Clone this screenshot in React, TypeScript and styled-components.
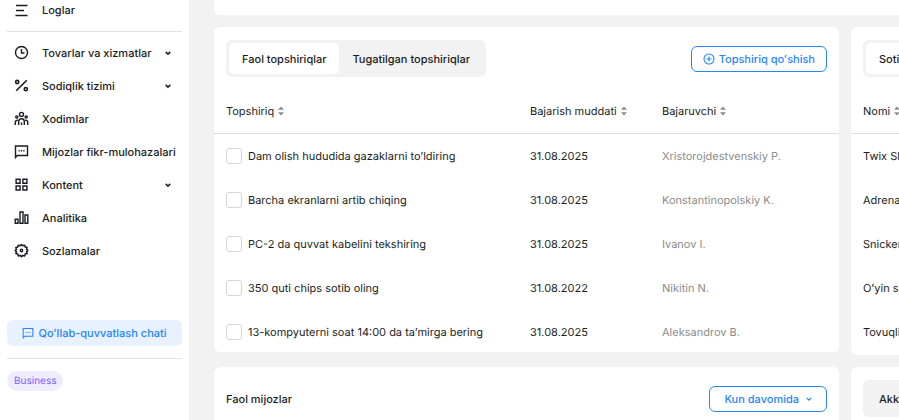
import React from "react";
import styled, { createGlobalStyle, css } from "styled-components";

const GlobalStyle = createGlobalStyle`
  *, *::before, *::after { box-sizing: border-box; }
  body {
    margin: 0;
    background: #f2f2f2;
    color: #1a1d24;
    font-family: "Inter", "Liberation Sans", sans-serif;
    font-size: 11px;
    line-height: 16px;
    text-rendering: geometricPrecision;
  }
  button, input { font: inherit; color: inherit; margin: 0; text-rendering: inherit; }
`;

const Page = styled.div`
  display: flex;
  min-height: 100vh;
  overflow: hidden;
`;

const Sidebar = styled.aside`
  flex: 0 0 189px;
  min-width: 0;
  padding: 0 7px 12px;
  background: #fff;
`;

const NavList = styled.ul<{ $spaced?: boolean }>`
  margin: 0;
  padding: ${(p) => (p.$spaced ? "4px 0 0" : "0")};
  list-style: none;
`;

const NavLink = styled.a<{ $short?: boolean }>`
  display: flex;
  align-items: center;
  gap: 13px;
  height: ${(p) => (p.$short ? "20px" : "33px")};
  padding: 0 11px 0 7px;
  color: inherit;
  font-weight: 500;
  text-decoration: none;
  white-space: nowrap;
`;

const NavLabel = styled.span`
  flex: 1;
  min-width: 0;
`;

const Rule = styled.hr<{ $gap: string }>`
  height: 1px;
  margin: ${(p) => p.$gap};
  border: 0;
  background: #e2e2e2;
`;

const SupportButton = styled.button`
  display: flex;
  align-items: center;
  justify-content: center;
  gap: 4px;
  width: 100%;
  height: 26px;
  margin-top: 53px;
  padding: 0;
  border: 0;
  border-radius: 6px;
  background: #e8f1ff;
  color: #2684ff;
  font-weight: 500;
`;

const Plan = styled.span`
  display: inline-block;
  padding: 2px 7px;
  border-radius: 10px;
  background: #f0ecff;
  color: #7b61ff;
  font-size: 10px;
`;

const Main = styled.main`
  flex: 1;
  min-width: 0;
  display: grid;
  grid-template-columns: minmax(0, 1fr) 48px;
  grid-template-rows: auto auto auto;
  align-content: start;
  align-items: start;
  gap: 12px;
  padding-left: 25px;
  overflow: hidden;
`;

const Card = styled.section<{ $top?: boolean; $side?: boolean }>`
  border-radius: 6px;
  background: #fff;
  ${(p) => p.$side && css`width: 320px;`}
  ${(p) =>
    p.$top &&
    css`
      grid-column: 1 / -1;
      height: 15px;
      border-radius: 0 0 0 6px;
    `}
`;

const CardHeader = styled.header`
  display: flex;
  align-items: center;
  justify-content: space-between;
  min-height: 62px;
  padding: 13px 12px 12px;
`;

const Tabs = styled.div`
  display: flex;
  padding: 3px;
  border-radius: 6px;
  background: #f2f2f2;
`;

const Tab = styled.button<{ $active?: boolean }>`
  height: 31px;
  padding: 0 13px;
  border: 0;
  border-radius: 5px;
  background: ${(p) => (p.$active ? "#fff" : "transparent")};
  font-weight: 500;
  white-space: nowrap;
`;

const OutlineButton = styled.button`
  display: flex;
  align-items: center;
  gap: 4px;
  height: 26px;
  padding: 0 11px;
  border: 1px solid #2684ff;
  border-radius: 6px;
  background: #fff;
  color: #2684ff;
  font-weight: 500;
  white-space: nowrap;
`;

const PeriodButton = styled(OutlineButton)`
  gap: 7px;
  padding: 0 14px;
`;

const Heading = styled.h2`
  margin: 0;
  font-size: 11px;
  font-weight: 500;
`;

const Table = styled.table<{ $roomy?: boolean }>`
  width: 100%;
  border-collapse: separate;
  border-spacing: 0;
  table-layout: fixed;

  tr:last-child > td {
    padding-bottom: ${(p) => (p.$roomy ? "15px" : "12px")};
  }
`;

const Th = styled.th<{ $width?: string }>`
  width: ${(p) => p.$width || "auto"};
  padding: 14px 0;
  border-bottom: 1px solid #dedede;
  font-weight: 400;
  text-align: left;

  &:first-child { padding-left: 12px; }
`;

const Td = styled.td<{ $muted?: boolean }>`
  padding: 14px 0;
  color: ${(p) => (p.$muted ? "#8c8c8c" : "inherit")};
  white-space: nowrap;

  &:first-child { padding-left: 12px; }
`;

const SortButton = styled.button`
  display: flex;
  align-items: center;
  gap: 4px;
  padding: 0;
  border: 0;
  background: none;
  white-space: nowrap;
`;

const Task = styled.label`
  display: flex;
  align-items: center;
  gap: 6px;
`;

const Checkbox = styled.input`
  appearance: none;
  flex: none;
  width: 16px;
  height: 16px;
  border: 1px solid #d6d6d6;
  border-radius: 3px;
  background: #fff;

  &:checked { background: #2684ff; border-color: #2684ff; }
`;

const Svg = styled.svg`
  display: block;
  flex: none;
`;

type IconName = "logs" | "clock" | "percent" | "people" | "chat" | "grid" | "chart" | "gear";

const shapes: Record<IconName, React.ReactNode> = {
  logs: <path d="M1.500 2.500h11.500M1.500 7.500h8M1 12.500h12" />,
  clock: (
    <>
      <circle cx="7" cy="7.500" r="6" />
      <path d="M7 4v4h3" />
    </>
  ),
  percent: (
    <g strokeWidth="1.600">
      <path d="M12.300 2.200 1.700 12.800" />
      <circle cx="2.700" cy="4" r="1.600" />
      <circle cx="11.300" cy="11.200" r="1.600" />
    </g>
  ),
  people: (
    <>
      <circle cx="7" cy="3.400" r="2" />
      <circle cx="2.300" cy="6" r="1.100" />
      <circle cx="11.700" cy="6" r="1.100" />
      <path d="M4.200 14v-3.500a2.800 2.800 0 0 1 5.600 0V14M.800 14v-2.700a2 2 0 0 1 2.600-2M13.200 14v-2.700a2 2 0 0 0-2.600-2M7 11.500V14" />
    </>
  ),
  chat: (
    <>
      <path d="M1 13.500v-11.500h12v9.500H2.800z" />
      <path d="M4 6.800h1.200M6.400 6.800h1.200M8.800 6.800h1.200" />
    </>
  ),
  grid: <path d="M1.600 2.200h4v4h-4zM8.400 2.200h4v4h-4zM1.600 9h4v4h-4zM8.400 9h4v4h-4z" />,
  chart: <path d="M.7 9.200h2.800v4H.7zM5.500 2h3v11.200h-3zM10.500 5h2.800v8.200h-2.800z" />,
  gear: (
    <>
      <path
        strokeWidth="1.600"
        strokeLinejoin="round"
        d="M5.700 2.800 7 1.500l1.300 1.300 1.900-.5.500 1.800 1.900.5-.5 1.800L13.300 7.500l-1.200 1.300.5 1.800-1.900.5-.5 1.800-1.900-.5L7 13.600l-1.300-1.200-1.900.5-.5-1.800-1.900-.5.500-1.800L.700 7.500l1.200-1.100-.5-1.800 1.900-.5.500-1.800z"
      />
      <circle cx="7" cy="7.500" r="1.200" />
    </>
  ),
};

const Icon = ({ name, size = 15, width = 1.4 }: { name: IconName; size?: number; width?: number }) => (
  <Svg width={size} height={size} viewBox="0 0 14 15" fill="none" stroke="currentColor" strokeWidth={width} aria-hidden="true">
    {shapes[name]}
  </Svg>
);

const Chevron = ({ width = 1.5 }: { width?: number }) => (
  <Svg width="6" height="6" viewBox="0 0 6 6" fill="none" stroke="currentColor" strokeWidth={width} aria-hidden="true">
    <path d="M.7 1.900 3 4.100l2.300-2.200" />
  </Svg>
);

const PlusCircle = () => (
  <Svg width="12" height="12" viewBox="0 0 12 12" fill="none" stroke="currentColor" strokeWidth="1.100" aria-hidden="true">
    <circle cx="6" cy="6" r="5" />
    <path d="M6 3.500v5M3.500 6h5" />
  </Svg>
);

const SortIcon = () => (
  <Svg width="6" height="10" viewBox="0 0 6 10" fill="#8c8c8c" aria-hidden="true">
    <path d="M0 3.700 3 .5l3 3.200zM0 6.300h6L3 9.500z" />
  </Svg>
);

const navItems: { icon: IconName; label: string; expandable?: boolean }[] = [
  { icon: "clock", label: "Tovarlar va xizmatlar", expandable: true },
  { icon: "percent", label: "Sodiqlik tizimi", expandable: true },
  { icon: "people", label: "Xodimlar" },
  { icon: "chat", label: "Mijozlar fikr-mulohazalari" },
  { icon: "grid", label: "Kontent", expandable: true },
  { icon: "chart", label: "Analitika" },
  { icon: "gear", label: "Sozlamalar" },
];

const tasks = [
  { title: "Dam olish hududida gazaklarni to’ldiring", due: "31.08.2025", person: "Xristorojdestvenskiy P." },
  { title: "Barcha ekranlarni artib chiqing", due: "31.08.2025", person: "Konstantinopolskiy K." },
  { title: "PC-2 da quvvat kabelini tekshiring", due: "31.08.2025", person: "Ivanov I." },
  { title: "350 quti chips sotib oling", due: "31.08.2022", person: "Nikitin N." },
  { title: "13-kompyuterni soat 14:00 da ta’mirga bering", due: "31.08.2025", person: "Aleksandrov B." },
];

const products = ["Twix Sheyk", "Adrenalin", "Snickers", "Oʻyin simi", "Tovuqli"];

const SortableTh = ({ label, width }: { label: string; width?: string }) => (
  <Th $width={width} scope="col">
    <SortButton type="button">
      {label}
      <SortIcon />
    </SortButton>
  </Th>
);

export default function App() {
  return (
    <>
      <GlobalStyle />
      <Page>
        <Sidebar>
          <nav>
            <NavList>
              <li>
                <NavLink href="#logs" $short>
                  <Icon name="logs" />
                  <NavLabel>Loglar</NavLabel>
                </NavLink>
              </li>
            </NavList>
            <Rule $gap="11px 0 0" />
            <NavList $spaced>
              {navItems.map((item) => (
                <li key={item.icon}>
                  <NavLink href={`#${item.icon}`}>
                    <Icon name={item.icon} />
                    <NavLabel>{item.label}</NavLabel>
                    {item.expandable && <Chevron />}
                  </NavLink>
                </li>
              ))}
            </NavList>
          </nav>
          <SupportButton type="button">
            <Icon name="chat" size={12} width={1.3} />
            Qoʻllab-quvvatlash chati
          </SupportButton>
          <Rule $gap="12px 0" />
          <Plan>Business</Plan>
        </Sidebar>
        <Main>
          <Card $top />
          <Card>
            <CardHeader>
              <Tabs role="tablist">
                <Tab type="button" role="tab" aria-selected="true" $active>Faol topshiriqlar</Tab>
                <Tab type="button" role="tab" aria-selected="false">Tugatilgan topshiriqlar</Tab>
              </Tabs>
              <OutlineButton type="button">
                <PlusCircle />
                Topshiriq qoʻshish
              </OutlineButton>
            </CardHeader>
            <Table>
              <thead>
                <tr>
                  <SortableTh label="Topshiriq" />
                  <SortableTh label="Bajarish muddati" width="132px" />
                  <SortableTh label="Bajaruvchi" width="177px" />
                </tr>
              </thead>
              <tbody>
                {tasks.map((task) => (
                  <tr key={task.title}>
                    <Td>
                      <Task>
                        <Checkbox type="checkbox" />
                        {task.title}
                      </Task>
                    </Td>
                    <Td>{task.due}</Td>
                    <Td $muted>{task.person}</Td>
                  </tr>
                ))}
              </tbody>
            </Table>
          </Card>
          <Card $side>
            <CardHeader>
              <Tabs role="tablist">
                <Tab type="button" role="tab" aria-selected="true" $active>Sotilgan</Tab>
              </Tabs>
            </CardHeader>
            <Table $roomy>
              <thead>
                <tr>
                  <SortableTh label="Nomi" />
                </tr>
              </thead>
              <tbody>
                {products.map((name) => (
                  <tr key={name}>
                    <Td>{name}</Td>
                  </tr>
                ))}
              </tbody>
            </Table>
          </Card>
          <Card>
            <CardHeader>
              <Heading>Faol mijozlar</Heading>
              <PeriodButton type="button">
                Kun davomida
                <Chevron width={1.2} />
              </PeriodButton>
            </CardHeader>
          </Card>
          <Card $side>
            <CardHeader>
              <Tabs role="tablist">
                <Tab type="button" role="tab" aria-selected="false">Akkaunt</Tab>
              </Tabs>
            </CardHeader>
          </Card>
        </Main>
      </Page>
    </>
  );
}
